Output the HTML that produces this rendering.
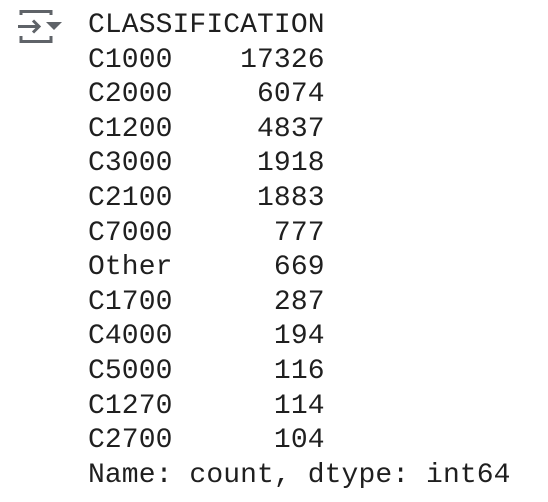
<html><head><style>
body{margin:0;background:#fff;width:548px;height:502px;overflow:hidden}
pre{position:absolute;left:88px;top:9px;margin:0;font-family:"Liberation Mono",monospace;font-size:28px;line-height:34.6px;color:#1f1f1f;letter-spacing:0.1px}
svg{position:absolute;left:16px;top:9px}
</style></head><body>
<svg width="48" height="36" viewBox="0 0 48 36" fill="none" stroke="#5f6368" stroke-width="3">
<path d="M5 6V2.5H35V6"/><path d="M5 27V32.5H35V27"/>
<path d="M2 17.5H23M17 11.5L23 17.5L17 23.5"/>
<path d="M30 13H46L38 21Z" fill="#5f6368" stroke="none"/>
</svg>
<pre>CLASSIFICATION
C1000    17326
C2000     6074
C1200     4837
C3000     1918
C2100     1883
C7000      777
Other      669
C1700      287
C4000      194
C5000      116
C1270      114
C2700      104
Name: count, dtype: int64</pre>
</body></html>
